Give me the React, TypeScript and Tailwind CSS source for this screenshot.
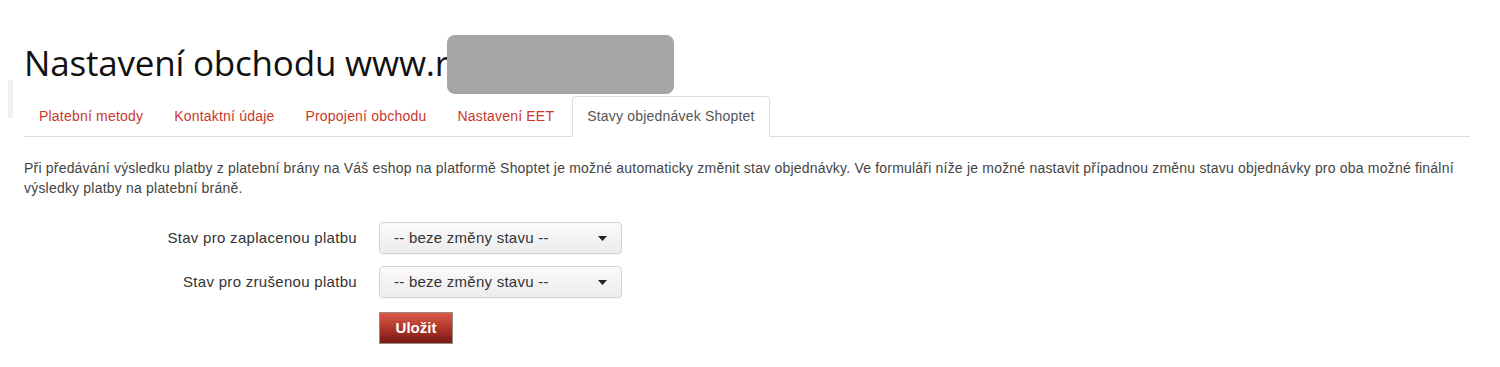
import React from "react";

const tabs = ["Platební metody", "Kontaktní údaje", "Propojení obchodu", "Nastavení EET"];

function Caret() {
  return (
    <svg width="9" height="5" viewBox="0 0 9 5" className="shrink-0">
      <path d="M0 0h9L4.5 5z" fill="#222" />
    </svg>
  );
}

function Select() {
  return (
    <div className="flex h-[32px] w-[243px] items-center justify-between rounded-[4px] border border-[#d4d4d4] bg-gradient-to-b from-[#fafafa] to-[#ececec] pl-[14px] pr-[14px] text-[15px] tracking-[0.25px] text-[#333] shadow-[0_1px_1px_rgba(0,0,0,0.05)]">
      <span>-- beze změny stavu --</span>
      <Caret />
    </div>
  );
}

export default function App() {
  return (
    <div className="relative h-[367px] w-[1500px] bg-white font-['Liberation_Sans',Arial,sans-serif] text-[#333]">
      <div className="absolute left-[8px] top-[80px] h-[38px] w-[5px] bg-[#f0f0f0]" />
      <div className="pl-6 pr-[30px] pt-[38px]">
        <div className="relative">
          <h1 className="font-['Open_Sans',sans-serif] text-[35px] leading-[50px] font-normal text-[#111] tracking-[-0.2px]">
            Nastavení obchodu www.r
          </h1>
          <div className="absolute left-[423px] top-[-3px] h-[59px] w-[227px] rounded-[8px] bg-[#a6a6a6]" />
        </div>
        <ul className="mt-[8px] flex border-b border-[#ddd] text-[14px] tracking-[0.2px]">
          {tabs.map((t) => (
            <li key={t} className="mr-[1px] -mb-px">
              <span className="block border border-transparent px-[14px] pt-[10px] pb-[10px] leading-[19px] text-[#c9372c]">
                {t}
              </span>
            </li>
          ))}
          <li className="-mb-px ml-[2px]">
            <span className="block rounded-t-[4px] border border-[#ddd] border-b-white bg-white px-[14px] pt-[10px] pb-[10px] leading-[19px] text-[#555]">
              Stavy objednávek Shoptet
            </span>
          </li>
        </ul>
        <p className="mt-[21px] text-[14px] leading-[20px] tracking-[0.2px] text-[#444]">
          Při předávání výsledku platby z platební brány na Váš eshop na platformě Shoptet je možné automaticky změnit stav objednávky. Ve formuláři níže je možné nastavit případnou změnu stavu objednávky pro oba možné finální výsledky platby na platební bráně.
        </p>
        <div className="mt-[24px] grid grid-cols-[333px_243px] gap-x-[22px] gap-y-[12px] items-center">
          <label className="text-right text-[15px] tracking-[0.3px] text-[#333]">Stav pro zaplacenou platbu</label>
          <Select />
          <label className="text-right text-[15px] tracking-[0.3px] text-[#333]">Stav pro zrušenou platbu</label>
          <Select />
          <div />
          <div>
            <button className="mt-[2px] h-[32px] w-[74px] border border-[#9a8a88] bg-gradient-to-b from-[#dc5a4b] via-[#b0362a] to-[#761c13] text-[15px] font-bold text-white">
              Uložit
            </button>
          </div>
        </div>
      </div>
    </div>
  );
}
